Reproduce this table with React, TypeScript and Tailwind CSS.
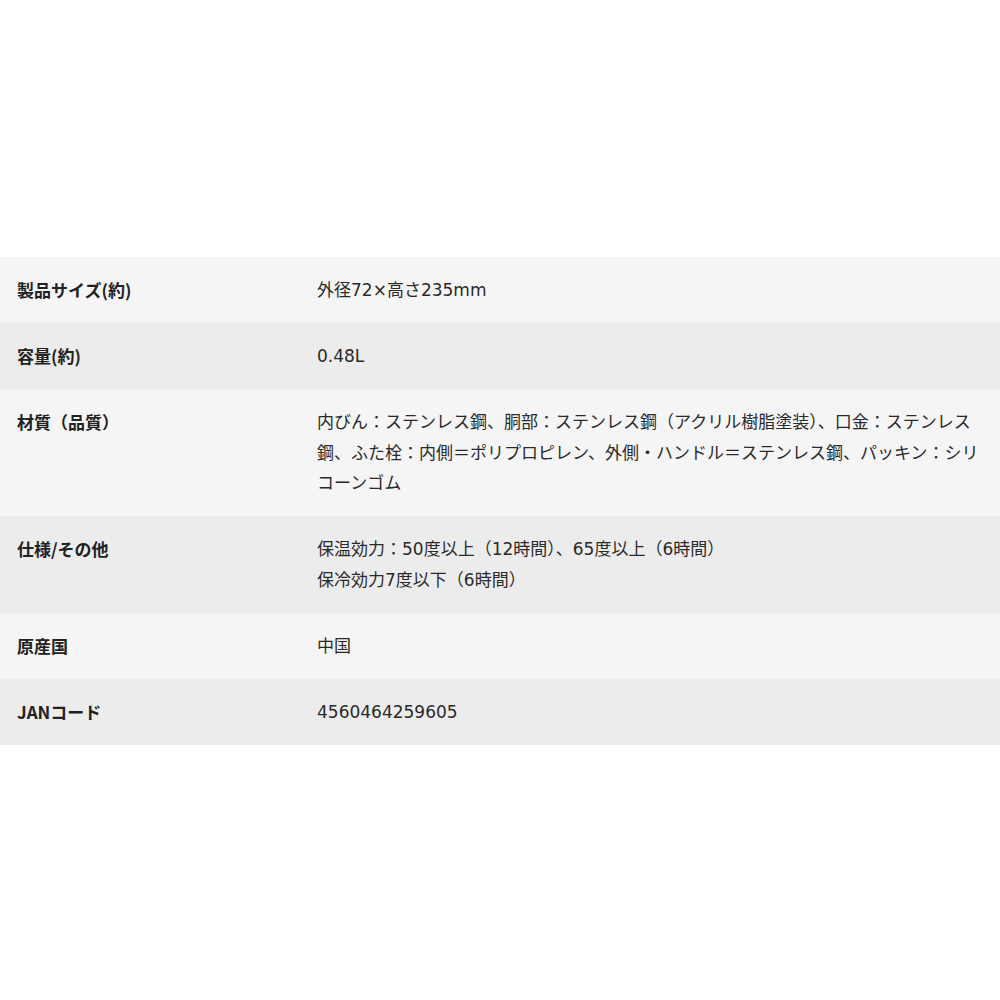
import React from 'react';

interface SpecRow {
  label: string;
  value: string[];
}

const rows: SpecRow[] = [
  { label: '製品サイズ(約)', value: ['外径72×高さ235mm'] },
  { label: '容量(約)', value: ['0.48L'] },
  {
    label: '材質（品質）',
    value: [
      '内びん：ステンレス鋼、胴部：ステンレス鋼（アクリル樹脂塗装）、口金：ステンレス鋼、ふた栓：内側＝ポリプロピレン、外側・ハンドル＝ステンレス鋼、パッキン：シリコーンゴム',
    ],
  },
  {
    label: '仕様/その他',
    value: ['保温効力：50度以上（12時間）、65度以上（6時間）', '保冷効力7度以下（6時間）'],
  },
  { label: '原産国', value: ['中国'] },
  { label: 'JANコード', value: ['4560464259605'] },
];

export default function App() {
  return (
    <div className="w-[1000px] h-[1000px] bg-white pt-[257px] text-[#222] font-['DejaVu_Sans','Noto_Sans_CJK_JP',sans-serif]">
      <div className="flex flex-col">
        {rows.map((row, i) => (
          <div
            key={row.label}
            className={`flex pt-[18px] pb-[17.5px] text-[17px] leading-[30.5px] ${i % 2 === 0 ? 'bg-[#f5f5f5]' : 'bg-[#ececec]'}`}
          >
            <div className="w-[300px] shrink-0 pl-[17px] font-bold font-['Noto_Sans_CJK_JP',sans-serif]">
              {row.label}
            </div>
            <div className="flex-1 pl-[17px] pr-[17px] text-[#2a2a2a]">
              {row.value.map((line) => (
                <p key={line}>{line}</p>
              ))}
            </div>
          </div>
        ))}
      </div>
    </div>
  );
}
